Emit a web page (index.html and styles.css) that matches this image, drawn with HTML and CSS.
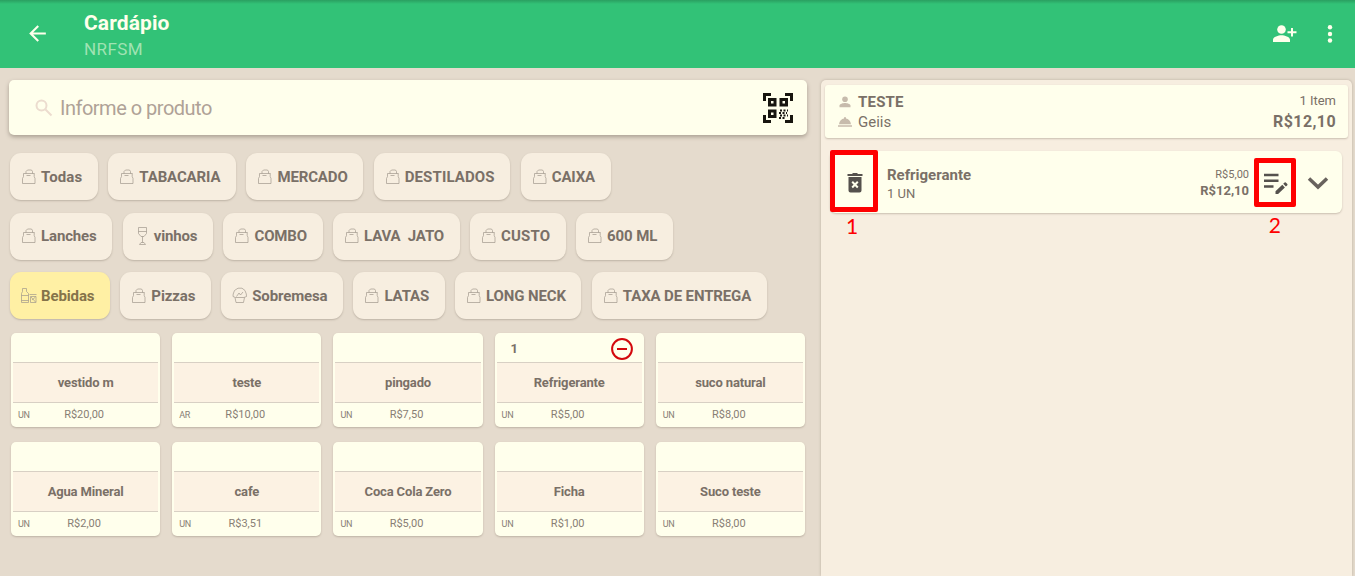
FILE: index.html
```html
<!DOCTYPE html>
<html lang="pt-BR">
  <head>
    <meta charset="utf-8" />
    <title>Cardápio</title>
    <link rel="stylesheet" href="styles.css">
  </head>
  <body>
    <svg class="defs">
      <symbol id="bag" viewBox="0 0 17 18">
        <path d="M3.500 5.500h11M3.500 5.500v3l-1 2v5h12.500v-5l-.8-2v-3M6 5.500v-2l1.500-1.500h4L12.500 3.500v2M6.500 7.500h4" />
      </symbol>
      <symbol id="glass" viewBox="0 0 17 18">
        <path d="M5.500 0.500h8v6L11 9.500H8L5.500 6.500zM5.500 4.500h8M9.500 9.500v6M6.500 17.500L8 15.500h3l1.500 2z" />
      </symbol>
      <symbol id="drinks" viewBox="0 0 17 18">
        <path d="M2.500 1.500h4v3l2 2v9H1.500v-9l1-2zM1.500 8.500h7M1.500 13.500h7M9.500 7.500h7M10.500 9.500h5.500v6h-5.500zM11 10l4.500 5M15.500 10L12 13" />
      </symbol>
      <symbol id="cake" viewBox="0 0 17 18">
        <path d="M4.500 10.500L2 9.500l.2-2.500L3.500 3.500 7 1.200h4L14 3.500l1.300 3.500.2 2.500-2.500 1zM4 10.500l1 5h7.500l1-5M5.500 9.500L8 6l1.500 2L12 5" />
      </symbol>
    </svg>

    <header class="topbar">
      <svg class="back" viewBox="0 0 24 24"><path d="M20 11H7.830l5.590-5.590L12 4l-8 8 8 8 1.410-1.410L7.830 13H20z" /></svg>
      <div class="titles">
        <h1>Cardápio</h1>
        <p>NRFSM</p>
      </div>
      <svg class="add-user" viewBox="0 0 26 20">
        <circle cx="9.500" cy="5.500" r="4.300" />
        <path d="M1 18v-2.200c0-3 5.500-4.600 8.500-4.600s8.500 1.600 8.500 4.600V18zM19 4h2v3.200h3.500v2H21v3.300h-2V9.200h-3.500v-2H19z" />
      </svg>
      <svg class="more" viewBox="0 0 6 18"><circle cx="3" cy="2.200" r="2.200" /><circle cx="3" cy="9" r="2.200" /><circle cx="3" cy="15.500" r="2.200" /></svg>
    </header>

    <main class="content">
      <section class="menu">
        <div class="search">
          <svg class="lens" viewBox="0 0 18 18"><circle cx="6.500" cy="6.500" r="5" /><path d="M10.500 10.500l6 6" /></svg>
          <span>Informe o produto</span>
          <svg class="qr" viewBox="0 0 30 30">
            <path d="M1.500 8V1.500H8M22 1.500h6.500V8M1.500 22v6.500H8M22 28.500h6.500V22" stroke-width="3" />
            <path d="M6.500 6.500h5.500v5.500H6.500zM18 6.500h5.500v5.500H18zM6.500 18h5.500v5.500H6.500z" stroke-width="3" />
            <path d="M17 17.500h8M16 20h8M17 22.500h8M16 25h6" stroke-width="1.800" stroke-dasharray="2 1.500" />
          </svg>
        </div>

        <div class="categories">
          <div class="chip-row">
            <div class="chip loose"><svg><use href="#bag" /></svg>Todas</div>
            <div class="chip"><svg><use href="#bag" /></svg>TABACARIA</div>
            <div class="chip"><svg><use href="#bag" /></svg>MERCADO</div>
            <div class="chip loose"><svg><use href="#bag" /></svg>DESTILADOS</div>
            <div class="chip"><svg><use href="#bag" /></svg>CAIXA</div>
          </div>
          <div class="chip-row">
            <div class="chip"><svg><use href="#bag" /></svg>Lanches</div>
            <div class="chip"><svg><use href="#glass" /></svg>vinhos</div>
            <div class="chip"><svg><use href="#bag" /></svg>COMBO</div>
            <div class="chip"><svg><use href="#bag" /></svg>LAVA&nbsp; JATO</div>
            <div class="chip loose"><svg><use href="#bag" /></svg>CUSTO</div>
            <div class="chip"><svg><use href="#bag" /></svg>600 ML</div>
          </div>
          <div class="chip-row">
            <div class="chip active"><svg><use href="#drinks" /></svg>Bebidas</div>
            <div class="chip"><svg><use href="#bag" /></svg>Pizzas</div>
            <div class="chip"><svg><use href="#cake" /></svg>Sobremesa</div>
            <div class="chip"><svg><use href="#bag" /></svg>LATAS</div>
            <div class="chip"><svg><use href="#bag" /></svg>LONG NECK</div>
            <div class="chip"><svg><use href="#bag" /></svg>TAXA DE ENTREGA</div>
          </div>
        </div>

        <div class="products">
          <div class="product"><div class="top"></div><div class="name">vestido m</div><div class="bottom"><span class="unit">UN</span><span class="price">R$20,00</span></div></div>
          <div class="product"><div class="top"></div><div class="name">teste</div><div class="bottom"><span class="unit">AR</span><span class="price">R$10,00</span></div></div>
          <div class="product"><div class="top"></div><div class="name">pingado</div><div class="bottom"><span class="unit">UN</span><span class="price">R$7,50</span></div></div>
          <div class="product">
            <div class="top">
              <span>1</span>
              <svg class="minus" viewBox="0 0 22 22"><circle cx="11" cy="11" r="9.900" /><path d="M6 11h10" /></svg>
            </div>
            <div class="name">Refrigerante</div>
            <div class="bottom"><span class="unit">UN</span><span class="price">R$5,00</span></div>
          </div>
          <div class="product"><div class="top"></div><div class="name">suco natural</div><div class="bottom"><span class="unit">UN</span><span class="price">R$8,00</span></div></div>
          <div class="product"><div class="top"></div><div class="name">Agua Mineral</div><div class="bottom"><span class="unit">UN</span><span class="price">R$2,00</span></div></div>
          <div class="product"><div class="top"></div><div class="name">cafe</div><div class="bottom"><span class="unit">UN</span><span class="price">R$3,51</span></div></div>
          <div class="product"><div class="top"></div><div class="name">Coca Cola Zero</div><div class="bottom"><span class="unit">UN</span><span class="price">R$5,00</span></div></div>
          <div class="product"><div class="top"></div><div class="name">Ficha</div><div class="bottom"><span class="unit">UN</span><span class="price">R$1,00</span></div></div>
          <div class="product"><div class="top"></div><div class="name">Suco teste</div><div class="bottom"><span class="unit">UN</span><span class="price">R$8,00</span></div></div>
        </div>
      </section>

      <aside class="order">
        <div class="summary">
          <div class="people">
            <div class="person customer">
              <svg viewBox="0 0 14 14"><circle cx="7" cy="4.300" r="2.800" /><path d="M1.500 12.200v-1.600c0-1.700 3.700-2.600 5.500-2.600s5.500.9 5.500 2.600v1.600z" /></svg>
              TESTE
            </div>
            <div class="person">
              <svg viewBox="0 0 14 14"><path d="M0 10.200h14v1.500H0zM1 9.300C1.300 6 3.700 4 6 3.600V2.200h2v1.400C10.300 4 12.700 6 13 9.300z" /></svg>
              Geiis
            </div>
          </div>
          <div class="totals">
            <span>1 Item</span>
            <strong>R$12,10</strong>
          </div>
        </div>

        <div class="item">
          <svg class="trash" viewBox="0 0 16 20">
            <path class="fill" d="M.5 1h4.500l1-1h4l1 1h4.500v2H.5zM1.500 4h13v13.500a2 2 0 0 1-2 2h-9a2 2 0 0 1-2-2z" />
            <path class="cross" d="M5.200 8.700l5.600 5.800M10.800 8.700l-5.600 5.800" />
          </svg>
          <div class="item-name">
            <strong>Refrigerante</strong>
            <span>1 UN</span>
          </div>
          <div class="item-price">
            <span>R$5,00</span>
            <strong>R$12,10</strong>
          </div>
          <svg class="edit" viewBox="0 0 26 22">
            <path class="lines" d="M2 3h14.500M2 8.700h14.500M2 14.500h9.500" />
            <path class="fill" d="M13.500 19.200l6.800-6.500 2.600 2.700-6.800 6.600H13.500zM21.200 11.800l1.400-1.300q.6-.5 1.200 0l1.500 1.500q.5.600 0 1.200l-1.400 1.300z" />
          </svg>
          <svg class="chevron" viewBox="0 0 22 14"><path d="M2 2.500l9 8.500 9-8.500" /></svg>
          <div class="mark mark-delete"></div>
          <div class="mark mark-edit"></div>
          <span class="mark-label label-delete">1</span>
          <span class="mark-label label-edit">2</span>
        </div>
      </aside>
    </main>
  </body>
</html>
```
FILE: styles.css
```css
* {
  box-sizing: border-box;
}
body {
  margin: 0;
  height: 576px;
  overflow: hidden;
  background-color: #e5dbcd;
  color: #7a7067;
  font-family: Roboto, sans-serif;
}
h1,
p {
  margin: 0;
}
svg {
  display: block;
  flex: none;
  overflow: visible;
}
.defs {
  position: absolute;
  width: 0;
  height: 0;
}
.topbar {
  display: flex;
  height: 68px;
  padding: 0 22px 0 25px;
  background: linear-gradient(#2a9f61, #32c277 4px);
  color: #ffffec;
  fill: #ffffec;
}
.back {
  width: 25px;
  height: 25px;
  margin-top: 21px;
}
.titles {
  flex: 1;
  padding: 11px 0 0 34px;
}
.titles h1 {
  font-size: 21px;
  line-height: 25px;
  font-weight: 700;
  letter-spacing: 0.100px;
}
.titles p {
  margin-top: 3px;
  font-size: 17px;
  line-height: 20px;
  letter-spacing: 0.400px;
  color: #a0e3b3;
}
.add-user {
  width: 26px;
  height: 20px;
  margin-top: 24px;
}
.more {
  width: 6px;
  height: 18px;
  margin: 25px 0 0 29px;
}
.content {
  display: flex;
  height: 508px;
}
.menu {
  width: 821px;
  padding: 12px 14px 0 9px;
}
.search {
  display: flex;
  align-items: center;
  height: 55px;
  padding: 0 14px 0 26px;
  border-radius: 5px;
  background-color: #ffffec;
  box-shadow: 0 2px 4px #a99f92;
  color: #afa297;
  font-size: 20px;
  letter-spacing: -0.500px;
}
.search span {
  flex: 1;
}
.lens {
  width: 18px;
  height: 18px;
  margin-right: 7px;
  fill: none;
  stroke: #ecdccf;
  stroke-width: 2;
}
.qr {
  width: 30px;
  height: 30px;
  fill: none;
  stroke: #17150f;
}
.categories {
  display: flex;
  flex-direction: column;
  gap: 12.500px;
  padding: 18px 0 0 1px;
}
.chip-row {
  display: flex;
  gap: 10.500px;
}
.chip {
  display: flex;
  align-items: center;
  height: 47px;
  padding: 0 15.500px 0 10px;
  border-radius: 11px;
  background-color: #f7eee0;
  box-shadow: 0 1px 2px #bdb2a4;
  font-size: 15px;
  font-weight: 700;
  letter-spacing: -0.130px;
  white-space: nowrap;
}
.chip.loose {
  letter-spacing: 0.130px;
}
.chip svg {
  width: 17px;
  height: 18px;
  margin-right: 4px;
  fill: none;
  stroke: #a1988d;
  stroke-width: 0.7;
}
.chip.active {
  background-color: #fff0a4;
  color: #85734a;
}
.products {
  display: grid;
  grid-template-columns: repeat(5, 1fr);
  gap: 15px 12px;
  padding: 14px 2px 0;
}
.product {
  height: 94px;
  padding: 0 2px;
  border-radius: 5px;
  background-color: #ffffec;
  box-shadow: 0 1px 2px #bdb2a4;
}
.top {
  display: flex;
  align-items: center;
  justify-content: space-between;
  height: 29px;
  padding: 2px 9px 0 14px;
  font-size: 13px;
  font-weight: 700;
}
.minus {
  width: 22px;
  height: 22px;
  fill: none;
  stroke: #d3080c;
  stroke-width: 2;
}
.name {
  height: 41px;
  border: solid #d8d0c4;
  border-width: 1px 0;
  background-color: #fcf2e3;
  font-size: 13px;
  line-height: 40px;
  font-weight: 700;
  letter-spacing: -0.150px;
  text-align: center;
}
.bottom {
  display: grid;
  grid-template-columns: 32px 1fr 35px;
  align-items: center;
  height: 23px;
  color: #887e74;
}
.unit {
  padding-left: 5px;
  font-size: 9px;
  letter-spacing: -0.300px;
}
.price {
  font-size: 11px;
  text-align: center;
}
.order {
  width: 531px;
  margin-top: 12px;
  padding: 5px 4px 0;
  border-radius: 5px 5px 0 0;
  background-color: #f7eee0;
  box-shadow: 0 0 3px #b8ad9f;
}
.summary {
  display: flex;
  justify-content: space-between;
  height: 53px;
  padding: 7px 12px 0 13px;
  border-radius: 3px;
  background-color: #ffffec;
  box-shadow: 0 1px 2px #c9beaf;
}
.person {
  display: flex;
  align-items: center;
  gap: 6px;
  height: 20px;
  font-size: 15px;
}
.person svg {
  width: 14px;
  height: 14px;
  fill: #c7bbac;
}
.customer {
  font-weight: 700;
  letter-spacing: 0.200px;
}
.totals {
  display: flex;
  flex-direction: column;
  align-items: flex-end;
  font-size: 13px;
  line-height: 18px;
}
.totals strong {
  font-size: 16px;
  line-height: 23px;
  letter-spacing: 0.400px;
}
.item {
  position: relative;
  display: flex;
  align-items: center;
  height: 62px;
  margin: 13px 6px 0 5px;
  padding: 0 13px 0 17px;
  border-radius: 6px;
  background-color: #ffffec;
  box-shadow: 0 1px 2px #c9beaf;
}
.trash {
  width: 16px;
  height: 20px;
  margin-top: 2px;
}
.fill {
  fill: #55514d;
}
.cross {
  stroke: #ffffec;
  stroke-width: 2;
}
.item-name {
  flex: 1;
  display: flex;
  flex-direction: column;
  padding: 5px 0 0 24px;
  font-size: 13px;
  line-height: 18px;
}
.item-name strong {
  font-size: 15px;
  line-height: 19px;
}
.item-price {
  display: flex;
  flex-direction: column;
  align-items: flex-end;
  padding-top: 1px;
  font-size: 11px;
  line-height: 15px;
}
.item-price strong {
  font-size: 13px;
  line-height: 17px;
}
.edit {
  width: 26px;
  height: 22px;
  margin: 2px 19px 0 13px;
}
.lines {
  fill: none;
  stroke: #55514d;
  stroke-width: 2.500;
}
.chevron {
  width: 22px;
  height: 14px;
  margin-top: 2px;
  fill: none;
  stroke: #68625d;
  stroke-width: 3.500;
}
/* red callouts over the row */
.mark {
  position: absolute;
  border: 5px solid #fe0000;
  border-radius: 2px;
}
.mark-delete {
  left: 0;
  top: -1px;
  width: 48px;
  height: 62px;
}
.mark-edit {
  right: 46px;
  top: 7px;
  width: 42px;
  height: 49px;
}
.mark-label {
  position: absolute;
  color: #fe0000;
  font-family: Lato, sans-serif;
  font-size: 21px;
  line-height: 24px;
}
.label-delete {
  left: 16px;
  top: 63px;
}
.label-edit {
  right: 61px;
  top: 62px;
}
```
